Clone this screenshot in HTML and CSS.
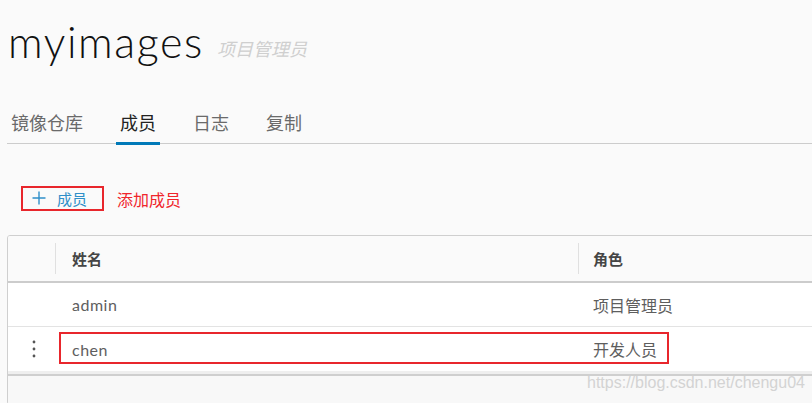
FILE: index.html
```html
<!DOCTYPE html>
<html lang="zh">
<head>
<meta charset="utf-8">
<title>myimages</title>
<link rel="stylesheet" href="styles.css">
</head>
<body>
<div class="page">
  <div class="title-row">
    <h1 class="title">myimages</h1>
    <span class="title-role">项目管理员</span>
  </div>

  <nav class="tabs">
    <span class="tab">镜像仓库</span>
    <span class="tab active">成员</span>
    <span class="tab">日志</span>
    <span class="tab">复制</span>
  </nav>

  <div class="actions">
    <button class="add-btn"><svg class="plus" width="14" height="14" viewBox="0 0 14 14"><path d="M7 0.5V13.5M0.5 7H13.5"/></svg><span>成员</span></button>
    <span class="note">添加成员</span>
  </div>

  <div class="grid">
    <div class="row head">
      <div class="cell c-act"></div>
      <div class="cell c-name"><span class="hcell">姓名</span></div>
      <div class="cell c-role"><span class="hcell">角色</span></div>
    </div>
    <div class="row body first">
      <div class="cell c-act"></div>
      <div class="cell c-name"><span class="tcell">admin</span></div>
      <div class="cell c-role"><span class="tcell">项目管理员</span></div>
    </div>
    <div class="row body second">
      <div class="cell c-act">
        <svg class="kebab" width="4" height="18" viewBox="0 0 4 18"><circle cx="2" cy="2" r="1.4"/><circle cx="2" cy="9" r="1.4"/><circle cx="2" cy="16" r="1.4"/></svg>
      </div>
      <div class="cell c-name"><span class="tcell">chen</span></div>
      <div class="cell c-role"><span class="tcell">开发人员</span></div>
      <div class="mark"></div>
    </div>
    <div class="grid-foot"></div>
  </div>

  <div class="watermark">https://blog.csdn.net/chengu04</div>
</div>
</body>
</html>
```

FILE: styles.css
```css
html, body {
  margin: 0;
  padding: 0;
  background: #fafafa;
  overflow: hidden;
}

body {
  width: 812px;
  height: 403px;
  font-family: "Lato", "Noto Sans CJK SC", sans-serif;
  color: #565656;
}

.page {
  position: relative;
  height: 403px;
  padding-left: 7px;
}

.title-row {
  display: flex;
  align-items: baseline;
  padding-top: 18px;
  padding-left: 1px;
  height: 48px;
}

.title {
  margin: 0;
  font-family: "Lato", sans-serif;
  font-weight: 300;
  font-size: 43px;
  line-height: 48px;
  color: #111;
  letter-spacing: 1.6px;
}

.title-role {
  margin-left: 13px;
  font-size: 18px;
  font-style: italic;
  color: #cfcfcf;
  font-family: "Noto Sans CJK SC", sans-serif;
  position: relative;
  top: -2px;
}

.tabs {
  display: flex;
  gap: 29px;
  margin-top: 38px;
  border-bottom: 1px solid #cccccc;
}

.tab {
  font-family: "Noto Sans CJK SC", sans-serif;
  font-size: 18px;
  line-height: 36px;
  padding: 0 4px 2px;
  border-bottom: 3px solid transparent;
  margin-bottom: -2px;
  color: #6a6a6a;
}

.tab.active {
  color: #222;
  border-bottom-color: #0079b8;
}

.actions {
  display: flex;
  align-items: center;
  margin-top: 42px;
  margin-left: 14px;
}

.add-btn {
  display: flex;
  align-items: center;
  box-sizing: border-box;
  width: 83px;
  height: 25px;
  border: 2px solid #e8262c;
  background: transparent;
  padding: 0 0 0 9px;
  font-family: "Noto Sans CJK SC", sans-serif;
  font-size: 15px;
  line-height: 21px;
  color: #2f8fc9;
}

.plus {
  stroke: #2f8fc9;
  stroke-width: 1.4;
  fill: none;
  margin-right: 11px;
  position: relative;
  top: -1px;
}

.note {
  margin-left: 13px;
  font-family: "Noto Sans CJK SC", sans-serif;
  font-size: 16px;
  color: #f0252c;
}

.grid {
  margin-top: 24px;
  width: 830px;
  border: 1px solid #cfcfcf;
  border-radius: 3px;
  overflow: hidden;
}

.row {
  display: grid;
  grid-template-columns: 47px 523px 1fr;
  align-items: center;
  position: relative;
}

.row.head {
  height: 45px;
  border-bottom: 2px solid #cccccc;
  background: #fafafa;
}

.row.body {
  height: 43px;
  background: #ffffff;
}

.row.first {
  border-bottom: 1px solid #e3e3e3;
}

.row.second {
  height: 44px;
}

.cell {
  display: flex;
  align-items: center;
  height: 100%;
}

.hcell {
  display: flex;
  align-items: center;
  height: 31px;
  border-left: 1px solid #e0e0e0;
  padding-left: 16px;
  font-family: "Noto Sans CJK SC", sans-serif;
  font-weight: 700;
  font-size: 15px;
  color: #454545;
}

.c-role .hcell {
  padding-left: 14px;
}

.tcell {
  padding-left: 17px;
  font-size: 16px;
  letter-spacing: 0.5px;
  color: #5e5e5e;
}

.c-role .tcell {
  padding-left: 15px;
  letter-spacing: 0;
  font-family: "Noto Sans CJK SC", sans-serif;
}

.c-act {
  justify-content: center;
  padding-left: 5px;
}

.kebab {
  fill: #555;
}

.mark {
  position: absolute;
  left: 51px;
  top: 5px;
  width: 610px;
  height: 32px;
  box-sizing: border-box;
  border: 2px solid #e8262c;
}

.grid-foot {
  height: 30px;
  border-top: 3px solid #efefef;
  box-shadow: inset 0 2px 0 #cfcfcf;
  background: #f8f8f8;
}

.watermark {
  position: absolute;
  left: 587px;
  top: 374px;
  font-family: "Liberation Sans", Arial, sans-serif;
  font-size: 16px;
  color: #d3d3d3;
}
```
